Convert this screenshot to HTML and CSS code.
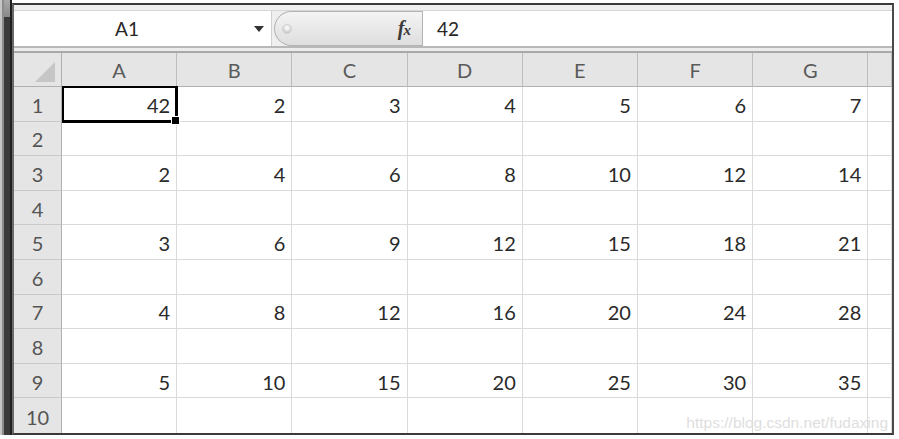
FILE: index.html
```html
<!DOCTYPE html>
<html>
<head>
<meta charset="utf-8">
<link rel="stylesheet" href="styles.css">
</head>
<body>
<div class="window">
  <div class="sidebar"></div>
  <div class="main">
    <div class="formula-bar">
      <div class="fb-row">
        <div class="namebox"><span class="name">A1</span><span class="caret"></span></div>
        <div class="pill"><span class="ball"></span><span class="fx"><i>f</i><i class="x">x</i></span></div>
        <div class="input">42</div>
      </div>
      <div class="fb-sep"></div>
    </div>
    <div class="grid">
      <div class="hd corner"><span class="tri"></span></div>
      <div class="hd">A</div><div class="hd">B</div><div class="hd">C</div><div class="hd">D</div><div class="hd">E</div><div class="hd">F</div><div class="hd">G</div><div class="hd"></div>

      <div class="rh">1</div><div class="c sel">42</div><div class="c">2</div><div class="c">3</div><div class="c">4</div><div class="c">5</div><div class="c">6</div><div class="c">7</div><div class="c last"></div>
      <div class="rh">2</div><div class="c"></div><div class="c"></div><div class="c"></div><div class="c"></div><div class="c"></div><div class="c"></div><div class="c"></div><div class="c last"></div>
      <div class="rh">3</div><div class="c">2</div><div class="c">4</div><div class="c">6</div><div class="c">8</div><div class="c">10</div><div class="c">12</div><div class="c">14</div><div class="c last"></div>
      <div class="rh">4</div><div class="c"></div><div class="c"></div><div class="c"></div><div class="c"></div><div class="c"></div><div class="c"></div><div class="c"></div><div class="c last"></div>
      <div class="rh">5</div><div class="c">3</div><div class="c">6</div><div class="c">9</div><div class="c">12</div><div class="c">15</div><div class="c">18</div><div class="c">21</div><div class="c last"></div>
      <div class="rh">6</div><div class="c"></div><div class="c"></div><div class="c"></div><div class="c"></div><div class="c"></div><div class="c"></div><div class="c"></div><div class="c last"></div>
      <div class="rh">7</div><div class="c">4</div><div class="c">8</div><div class="c">12</div><div class="c">16</div><div class="c">20</div><div class="c">24</div><div class="c">28</div><div class="c last"></div>
      <div class="rh">8</div><div class="c"></div><div class="c"></div><div class="c"></div><div class="c"></div><div class="c"></div><div class="c"></div><div class="c"></div><div class="c last"></div>
      <div class="rh">9</div><div class="c">5</div><div class="c">10</div><div class="c">15</div><div class="c">20</div><div class="c">25</div><div class="c">30</div><div class="c">35</div><div class="c last"></div>
      <div class="rh">10</div><div class="c"></div><div class="c"></div><div class="c"></div><div class="c"></div><div class="c"></div><div class="c"></div><div class="c"></div><div class="c last"></div>
    </div>
  </div>
  <div class="watermark">https://blog.csdn.net/fudaxing</div>
</div>
</body>
</html>
```

FILE: styles.css
```css
* { box-sizing: border-box; }
html, body { margin: 0; padding: 0; background: #ffffff; }
body { width: 899px; height: 439px; overflow: hidden; font-family: Lato, "Open Sans", sans-serif; }

.window {
  position: relative;
  display: flex;
  width: 894px;
  height: 435px;
}

.sidebar {
  width: 12px;
  flex: none;
  background:
    linear-gradient(#a8a8a8, #8a8a8a) 4px 0 / 6px 17px no-repeat,
    linear-gradient(to right, #c6c6c6 0 2px, #8c8c8c 2px 4px, #3a3a3a 4px 10px, #1f1f1f 10px 12px);
}

.main {
  flex: 1;
  display: flex;
  flex-direction: column;
  margin-top: 3px;
  border-top: 2px solid #3a3a3a;
  border-left: 2px solid #6a6a6a;
  border-right: 2px solid #4a4a4a;
  border-bottom: 2px solid #3a3a3a;
}

.formula-bar {
  background: #efefef;
  padding-top: 5px;
  flex: none;
}

.fb-row {
  display: flex;
  height: 36px;
  border-top: 1px solid #d6d6d6;
}

.namebox {
  width: 258px;
  display: flex;
  align-items: center;
  background: #ffffff;
  border-right: 1px solid #d0d0d0;
}
.name {
  flex: 1;
  text-align: center;
  font-size: 19px;
  color: #262626;
}
.caret {
  width: 0; height: 0;
  border-left: 5px solid transparent;
  border-right: 5px solid transparent;
  border-top: 6px solid #333;
  margin-right: 7px;
  margin-left: 14px;
}

.pill {
  width: 148px;
  margin-left: 2px;
  display: flex;
  align-items: center;
  justify-content: space-between;
  border: 1px solid #b4b4b4;
  border-right: none;
  border-radius: 18px 0 0 18px;
  background: linear-gradient(#f4f4f4, #dedede);
  padding: 0 12px 0 7px;
}
.ball {
  width: 10px; height: 10px;
  border-radius: 50%;
  background: radial-gradient(circle at 50% 35%, #f6f6f6 0 20%, #c4c4c4 80%);
  border: 1px solid #d2d2d2;
}
.fx {
  font-family: "Liberation Serif", serif;
  font-weight: bold;
  font-size: 20px;
  color: #3a3a3a;
  letter-spacing: -1px;
}
.fx .x { font-size: 15px; }

.input {
  flex: 1;
  background: #ffffff;
  border-left: 1px solid #b2b2b2;
  font-size: 19px;
  color: #262626;
  display: flex;
  align-items: center;
  padding-left: 14px;
}

.fb-sep {
  height: 7px;
  border-top: 2px solid #b8b8b8;
  border-bottom: 2px solid #a9a9a9;
  background: #ececec;
}

.grid {
  flex: 1;
  display: grid;
  grid-template-columns: 48px repeat(7, 115.2px) 1fr;
  grid-template-rows: 34px repeat(10, 1fr);
  font-size: 20px;
}

.hd {
  background: #e5e5e5;
  border-right: 1px solid #bdbdbd;
  border-bottom: 1px solid #b0b0b0;
  color: #5a5a5a;
  display: flex;
  align-items: center;
  justify-content: center;
  padding-top: 1px;
}
.corner { position: relative; border-right-color: #b0b0b0; }
.tri {
  position: absolute;
  right: 6px;
  bottom: 4px;
  width: 0; height: 0;
  border-left: 20px solid transparent;
  border-bottom: 20px solid #c6c6c6;
}

.rh {
  background: #e5e5e5;
  border-right: 1px solid #b0b0b0;
  border-bottom: 1px solid #c9c9c9;
  color: #555555;
  display: flex;
  align-items: center;
  justify-content: center;
  padding-top: 2px;
}

.c {
  border-right: 1px solid #dadada;
  border-bottom: 1px solid #dadada;
  color: #2a2a2a;
  display: flex;
  align-items: center;
  justify-content: flex-end;
  padding: 2px 6px 0 0;
}
.grid > :nth-last-child(-n+9) { border-bottom: none; }

.sel { position: relative; }
.sel::before {
  content: "";
  position: absolute;
  left: 0; top: -1px; right: -2px; bottom: -2px;
  border: 2px solid #000;
  border-right-width: 3px;
  border-bottom-width: 3px;
}
.sel::after {
  content: "";
  position: absolute;
  right: -4px; bottom: -4px;
  width: 7px; height: 7px;
  background: #000;
  border: 1px solid #fff;
}

.watermark {
  position: absolute;
  right: 6px;
  bottom: 3px;
  font-family: "Liberation Sans", Arial, sans-serif;
  font-size: 15.5px;
  color: #dedede;
}
```
